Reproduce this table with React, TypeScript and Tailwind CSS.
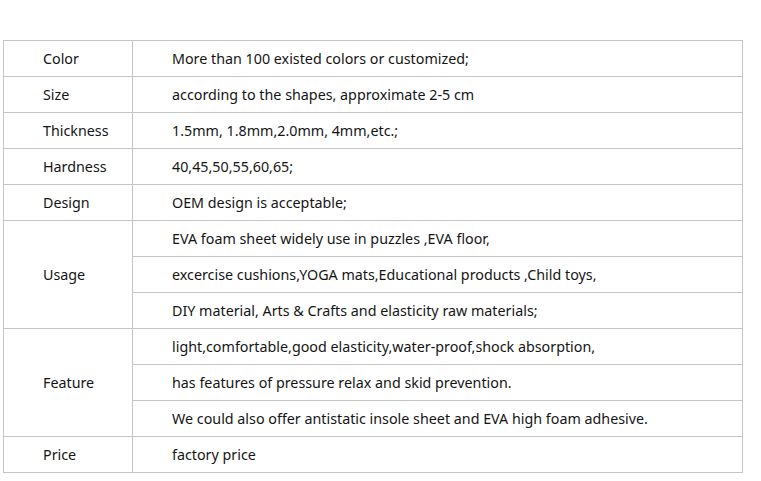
import React from 'react';

type Row = { label: string; values: string[] };

const rows: Row[] = [
  { label: 'Color', values: ['More than 100 existed colors or customized;'] },
  { label: 'Size', values: ['according to the shapes, approximate 2-5 cm'] },
  { label: 'Thickness', values: ['1.5mm, 1.8mm,2.0mm, 4mm,etc.;'] },
  { label: 'Hardness', values: ['40,45,50,55,60,65;'] },
  { label: 'Design', values: ['OEM design is acceptable;'] },
  {
    label: 'Usage',
    values: [
      'EVA foam sheet widely use in puzzles ,EVA floor,',
      'excercise cushions,YOGA mats,Educational products ,Child toys,',
      'DIY material, Arts & Crafts and elasticity raw materials;',
    ],
  },
  {
    label: 'Feature',
    values: [
      'light,comfortable,good elasticity,water-proof,shock absorption,',
      'has features of pressure relax and skid prevention.',
      'We could also offer antistatic insole sheet and EVA high foam adhesive.',
    ],
  },
  { label: 'Price', values: ['factory price'] },
];

const cell = 'border border-[#c4c4c4] h-9 p-0 pl-[39px] text-left align-middle';

const App = () => {
  return (
    <div className="bg-white w-[761px] h-[481px] pt-10 pl-[3px] font-['Noto_Sans',sans-serif] text-[14.3px] text-[#151515]">
      <table className="border-collapse w-[740px] table-fixed">
        <colgroup>
          <col className="w-[129px]" />
          <col />
        </colgroup>
        <tbody>
          {rows.map((row) =>
            row.values.map((v, i) => (
              <tr key={row.label + i} className="h-9">
                {i === 0 && (
                  <td rowSpan={row.values.length} className={cell}>
                    {row.label}
                  </td>
                )}
                <td className={cell}>{v}</td>
              </tr>
            ))
          )}
        </tbody>
      </table>
    </div>
  );
};

export default App;
